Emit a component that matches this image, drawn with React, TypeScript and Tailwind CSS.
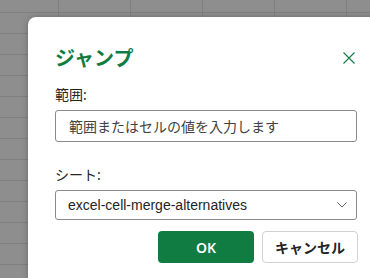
const JumpDialog = () => {
    return (
        <div className="ml-[28px] mt-[17px] w-[356px] h-[300px] bg-white rounded-[8px] shadow-[0_0_6px_rgba(0,0,0,0.25)] px-[27px] pt-[27px]">
            <div className="flex justify-between items-center h-[30px]">
                <h1 className="text-[20px] leading-[30px] font-bold text-[#107c41]">ジャンプ</h1>
                <button className="w-[12px] h-[12px] mr-[2px] -mt-[2px]">
                    <svg width="12" height="12" viewBox="0 0 12 12" fill="none" stroke="#107c41" strokeWidth="1.1">
                        <path d="M0.5 0.5L11.5 11.5M11.5 0.5L0.5 11.5" />
                    </svg>
                </button>
            </div>
            <p className="mt-[11px] text-[14px] leading-[20px] text-[#242424]">範囲:</p>
            <div className="mt-[5px] h-[32px] border border-[#8a8a8a] rounded-[3px] flex items-center px-[13px]">
                <span className="text-[14px] text-[#424242]">範囲またはセルの値を入力します</span>
            </div>
            <p className="mt-[23px] text-[14px] leading-[20px] text-[#242424]">シート:</p>
            <div className="mt-[5px] h-[30px] border border-[#8a8a8a] rounded-[3px] flex items-center justify-between pl-[12px] pr-[9px]">
                <span className="text-[14px] text-[#242424] font-['Liberation_Sans',sans-serif]">excel-cell-merge-alternatives</span>
                <svg width="10" height="6" viewBox="0 0 10 6" fill="none" stroke="#616161" strokeWidth="1">
                    <path d="M0.5 0.5L5 5L9.5 0.5" />
                </svg>
            </div>
            <div className="flex justify-end gap-[8px] mt-[11px] -mr-[1px]">
                <button className="w-[96px] h-[32px] rounded-[4px] bg-[#107c41] text-white text-[14px] font-semibold">OK</button>
                <button className="w-[96px] h-[32px] rounded-[4px] border border-[#d1d1d1] bg-white text-[#242424] text-[14px] font-bold">キャンセル</button>
            </div>
        </div>
    );
};

export default function App() {
    return (
        <div
            className="w-[370px] h-[278px] overflow-hidden bg-[#8e8e8e] bg-[linear-gradient(#808080_1px,transparent_1px),linear-gradient(90deg,#808080_1px,transparent_1px)] bg-size-[72px_21px] bg-position-[58px_12px] pt-px"
            style={{ fontFamily: '"Noto Sans", "Noto Sans CJK JP", sans-serif' }}
        >
            <div className="-mt-px">
                <JumpDialog />
            </div>
        </div>
    );
}
